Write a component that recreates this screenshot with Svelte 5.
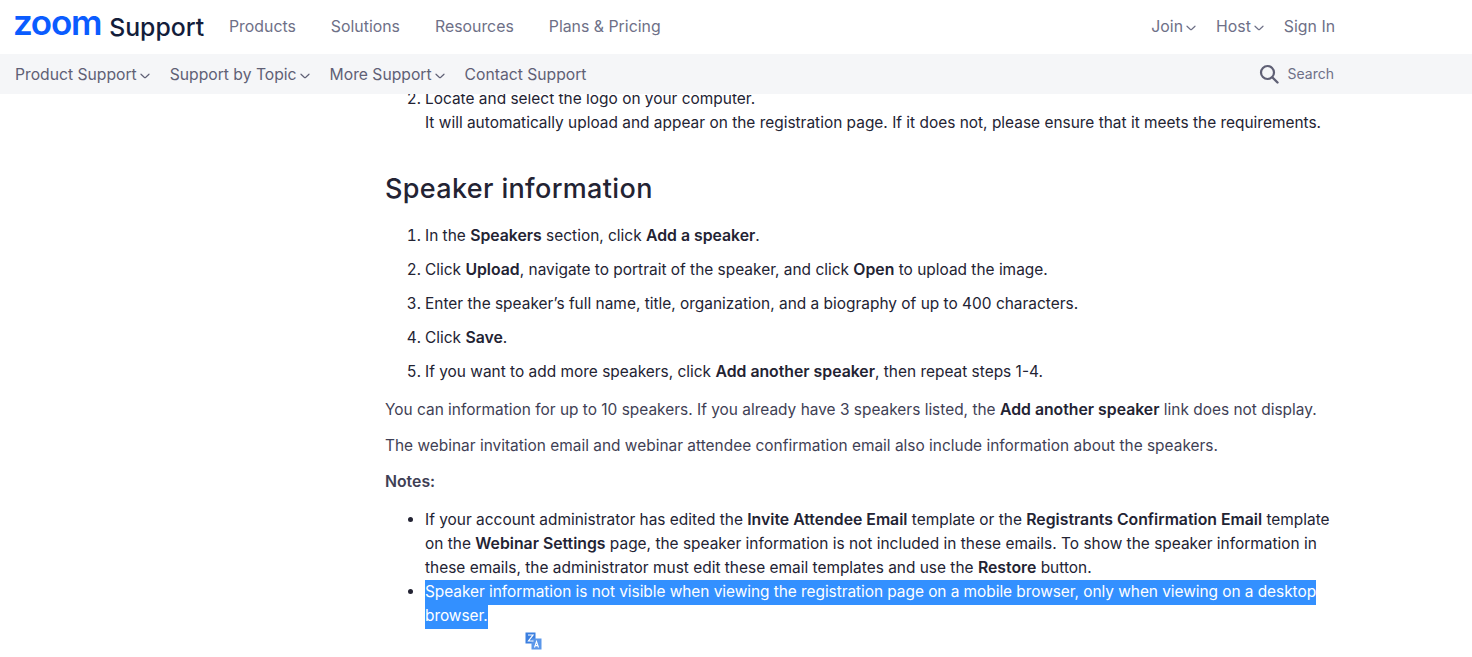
<script>
	const mainNav = ["Products", "Solutions", "Resources", "Plans & Pricing"];
	const subNav = [
		{ label: "Product Support", menu: true },
		{ label: "Support by Topic", menu: true },
		{ label: "More Support", menu: true },
		{ label: "Contact Support", menu: false }
	];
</script>

{#snippet chevron()}
	<svg class="chevron" viewBox="0 0 10 6" width="10" height="6" aria-hidden="true">
		<path d="M1 1.2 L4.2 4.2 Q5 4.9 5.8 4.2 L9 1.2" fill="none" stroke="currentColor" stroke-width="1.2" stroke-linecap="round" />
	</svg>
{/snippet}

<div class="page">
	<header>
		<div class="top-bar">
			<div class="brand">
				<span class="logo">zoom</span>
				<span class="brand-name">Support</span>
			</div>
			<nav class="main-nav">
				{#each mainNav as item}
					<a href="#top">{item}</a>
				{/each}
			</nav>
			<nav class="account-nav">
				<a href="#top">Join{@render chevron()}</a>
				<a href="#top">Host{@render chevron()}</a>
				<a href="#top">Sign In</a>
			</nav>
		</div>
		<div class="sub-bar">
			<nav class="sub-nav">
				{#each subNav as item}
					<a href="#top">{item.label}{#if item.menu}{@render chevron()}{/if}</a>
				{/each}
			</nav>
			<div class="search">
				<svg viewBox="0 0 20 20" width="20" height="20" aria-hidden="true">
					<circle cx="8.5" cy="8.5" r="6.5" fill="none" stroke="currentColor" stroke-width="2.2" />
					<path d="M13.5 13.5 L18.5 18.5" stroke="currentColor" stroke-width="2.4" stroke-linecap="round" />
				</svg>
				<span>Search</span>
			</div>
		</div>
	</header>

	<main>
		<ol start="2" class="upload-steps">
			<li>Locate and select the logo on your computer.<br />It will automatically upload and appear on the registration page. If it does not, please ensure that it meets the requirements.</li>
		</ol>

		<h2>Speaker information</h2>

		<ol class="steps">
			<li>In the <b>Speakers</b> section, click <b>Add a speaker</b>.</li>
			<li>Click <b>Upload</b>, navigate to portrait of the speaker, and click <b>Open</b> to upload the image.</li>
			<li>Enter the speaker’s full name, title, organization, and a biography of up to 400 characters.</li>
			<li>Click <b>Save</b>.</li>
			<li>If you want to add more speakers, click <b>Add another speaker</b>, then repeat steps 1-4.</li>
		</ol>

		<p>You can information for up to 10 speakers. If you already have 3 speakers listed, the <b>Add another speaker</b> link does not display.</p>
		<p>The webinar invitation email and webinar attendee confirmation email also include information about the speakers.</p>
		<p class="notes"><b>Notes:</b></p>

		<ul>
			<li>If your account administrator has edited the <b>Invite Attendee Email</b> template or the <b>Registrants Confirmation Email</b> template on the <b>Webinar Settings</b> page, the speaker information is not included in these emails. To show the speaker information in these emails, the administrator must edit these email templates and use the <b>Restore</b> button.</li>
			<li><span class="selected">Speaker information is not visible when viewing the registration page on a mobile browser, only when viewing on a desktop browser.</span></li>
		</ul>

		<div class="translate-popup">
			<svg viewBox="0 0 17 18" width="17" height="18" aria-hidden="true">
				<rect x="0.5" y="0.5" width="10" height="11" fill="#3b7fe0" />
				<rect x="6.5" y="6.5" width="10" height="11" fill="#5b97ea" />
				<path d="M3 3 H8 L3.5 9 H8.5" fill="none" stroke="#fff" stroke-width="1.2" />
				<path d="M9.5 15.5 L11.5 9.5 L13.5 15.5 M10.2 13.6 H12.8" fill="none" stroke="#fff" stroke-width="1.1" />
			</svg>
		</div>
	</main>
</div>

<style>
	:global(body) {
		overflow: hidden;
		background: #fff;
	}
	.page {
		height: 657px;
		overflow: hidden;
		font-family: Inter, "Liberation Sans", sans-serif;
		font-size: 15.45px;
		line-height: 24px;
		color: #232333;
	}
	header {
		position: relative;
		z-index: 2;
		background: #fff;
	}
	a {
		color: inherit;
		text-decoration: none;
	}
	.top-bar {
		height: 53px;
		padding-bottom: 1px;
		display: flex;
		align-items: center;
		padding-left: 15px;
		padding-right: 137px;
		font-size: 15.85px;
		color: #6e7087;
	}
	.brand {
		display: flex;
		align-items: center;
		gap: 8px;
		width: 214px;
	}
	.logo {
		font-size: 35px;
		font-weight: 600;
		letter-spacing: -1.3px;
		line-height: 40px;
		color: #0b5cff;
		position: relative;
		top: -5px;
		margin-left: -2px;
	}
	.brand-name {
		font-size: 24.8px;
		font-weight: 500;
		color: #131d3b;
	}
	.main-nav {
		display: flex;
		gap: 35px;
	}
	.account-nav {
		margin-left: auto;
		display: flex;
		gap: 20px;
	}
	.chevron {
		margin-left: 3px;
		vertical-align: 1px;
	}
	.sub-bar {
		height: 39px;
		padding-top: 1px;
		display: flex;
		align-items: center;
		justify-content: space-between;
		padding-left: 15px;
		padding-right: 138px;
		background: #f5f6f8;
		font-size: 15.7px;
		color: #5f6075;
	}
	.sub-nav {
		display: flex;
		gap: 20px;
	}
	.search {
		display: flex;
		align-items: center;
		gap: 9px;
		margin-top: -1px;
		font-size: 14px;
		color: #6e7087;
	}
	.search svg {
		color: #5f6075;
	}
	main {
		position: relative;
		margin-top: -7px;
		padding: 0 137px 0 385px;
	}
	ol, ul {
		margin: 0;
		padding-left: 40px;
	}
	.upload-steps {
		margin-bottom: 37px;
	}
	h2 {
		margin: 0 0 18px;
		font-family: Inter, sans-serif;
		font-size: 27px;
		line-height: 34px;
		font-weight: 500;
		letter-spacing: 0.35px;
		color: #232333;
	}
	.steps li {
		margin-bottom: 10px;
	}
	.steps {
		margin-bottom: 14px;
	}
	p {
		margin: 0 0 12px;
		color: #3f3f55;
	}
	.notes {
		margin-bottom: 14px;
	}
	b {
		font-size: 15.8px;
		font-weight: 600;
		color: #232333;
	}
	.notes b {
		color: #3f3f55;
	}
	.selected {
		background: #3390ff;
		color: #fff;
		letter-spacing: -0.05px;
		padding: 2px 0 4px;
		-webkit-box-decoration-break: clone;
		box-decoration-break: clone;
	}
	.translate-popup {
		position: absolute;
		left: 525px;
		top: 545px;
		line-height: 0;
	}
</style>
